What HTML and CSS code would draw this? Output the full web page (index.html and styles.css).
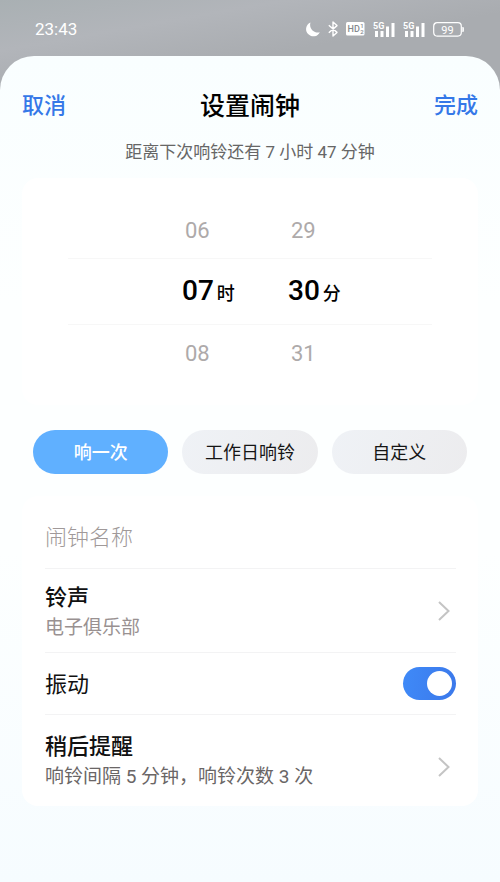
FILE: index.html
```html
<!DOCTYPE html>
<html lang="zh-CN">
<head>
<meta charset="utf-8">
<meta name="viewport" content="width=device-width, initial-scale=1">
<title>设置闹钟</title>
<link rel="stylesheet" href="styles.css">
</head>
<body>
<div class="status">
  <time class="clock">23:43</time>
  <div class="indicators">
    <svg class="moon" width="15" height="15" viewBox="0 0 15 15" aria-hidden="true"><path d="M5.500.5A7.200 7.200 0 1 0 14.800 10.200C9.500 11.600 3.500 6.600 5.500.5z" fill="#fff"/></svg>
    <svg class="bluetooth" width="10" height="16" viewBox="0 0 10 16" aria-hidden="true"><path d="M.8 4.300 9 11.400 5 15V1l4 3.600L.8 11.700" fill="none" stroke="#fff" stroke-width="1.400" stroke-linejoin="round"/></svg>
    <svg class="hd" width="19" height="14" viewBox="0 0 19 14" aria-hidden="true"><rect width="18.500" height="13.500" rx="1.500" fill="#fff"/><g fill="#85898e" font-family="Roboto, sans-serif" font-weight="500"><text x="1.500" y="10.300" font-size="9">HD</text><text x="14.300" y="6.400" font-size="6">1</text><text x="14.300" y="12" font-size="6">2</text></g></svg>
    <svg class="signal" width="22" height="17" viewBox="0 0 22 17" aria-hidden="true"><text x="0" y="7.500" fill="#fff" font-family="Roboto, sans-serif" font-size="9" font-weight="700">5G</text><path d="M2 10h3v6H2zM7.500 10h3v6h-3zM13 5.500h3V16h-3zM18.500 2h3v14h-3z" fill="#fff"/></svg>
    <svg class="signal" width="22" height="17" viewBox="0 0 22 17" aria-hidden="true"><text x="0" y="7.500" fill="#fff" font-family="Roboto, sans-serif" font-size="9" font-weight="700">5G</text><path d="M2 10h3v6H2zM7.500 10h3v6h-3zM13 5.500h3V16h-3zM18.500 2h3v14h-3z" fill="#fff"/></svg>
    <svg class="battery" width="31" height="15" viewBox="0 0 31 15" aria-hidden="true"><rect x=".7" y=".7" width="27.600" height="13.400" rx="3.500" fill="none" stroke="#fff" stroke-width="1.200"/><path d="M29.300 5h.6q1 0 1 1v3q0 1-1 1h-.6z" fill="#fff"/><text x="14.500" y="11.500" text-anchor="middle" fill="#fff" font-family="Roboto, sans-serif" font-size="11">99</text></svg>
  </div>
</div>

<main class="sheet">
  <header class="header">
    <button class="action" type="button">取消</button>
    <h1 class="title">设置闹钟</h1>
    <button class="action" type="button">完成</button>
  </header>
  <p class="countdown">距离下次响铃还有 7 小时 47 分钟</p>

  <section class="card picker" aria-label="时间">
    <div class="picker-row near"><span>06</span><span>29</span></div>
    <div class="picker-row current"><span>07<small>时</small></span><span>30<small>分</small></span></div>
    <div class="picker-row near"><span>08</span><span>31</span></div>
  </section>

  <div class="repeat">
    <button class="pill selected" type="button">响一次</button>
    <button class="pill" type="button">工作日响铃</button>
    <button class="pill" type="button">自定义</button>
  </div>

  <section class="card settings">
    <div class="row name-row"><input class="name" type="text" placeholder="闹钟名称" aria-label="闹钟名称"></div>
    <a class="row link-row" href="#ringtone">
      <span class="text"><span class="label">铃声</span><span class="value muted">电子俱乐部</span></span>
      <svg class="chevron" width="12" height="20" viewBox="0 0 12 20" aria-hidden="true"><path d="M1 1l9.500 9L1 19" /></svg>
    </a>
    <div class="row toggle-row">
      <label class="label" for="vibrate">振动</label>
      <input class="switch" id="vibrate" type="checkbox" role="switch" checked>
    </div>
    <a class="row link-row last" href="#snooze">
      <span class="text"><span class="label">稍后提醒</span><span class="value">响铃间隔 5 分钟，响铃次数 3 次</span></span>
      <svg class="chevron" width="12" height="20" viewBox="0 0 12 20" aria-hidden="true"><path d="M1 1l9.500 9L1 19" /></svg>
    </a>
  </section>
</main>
</body>
</html>
```
FILE: styles.css
```css
* {
  box-sizing: border-box;
}

body {
  margin: 0;
  min-height: 100vh;
  display: flex;
  flex-direction: column;
  background: linear-gradient(170deg, #a9b0b3 0, #b2b5ba 50px, #a9acb0 100px);
  font-family: Roboto, "Noto Sans CJK SC", sans-serif;
  color: #111;
}

button,
input {
  margin: 0;
  padding: 0;
  border: 0;
  background: none;
  font: inherit;
}

.status {
  display: flex;
  justify-content: space-between;
  align-items: center;
  height: 56px;
  padding: 2px 36px 0 35px;
  color: #fff;
}

.clock {
  font-size: 17px;
}

.indicators {
  display: flex;
  align-items: center;
  gap: 8px;
}

.indicators svg {
  display: block;
}

.sheet {
  flex: 1;
  padding: 28px 22px 76px;
  border-radius: 34px 34px 0 0;
  background: linear-gradient(180deg, #f9feff 0, #fdffff 30%, #fdffff 60%, #f6fcff 100%);
}

.header {
  display: flex;
  justify-content: space-between;
  align-items: center;
  height: 44px;
}

.action {
  color: #3578e8;
  font-size: 22px;
  font-weight: 500;
  line-height: 32px;
  cursor: pointer;
}

.title {
  margin: 0;
  padding-top: 2px;
  color: #000;
  font-size: 25px;
  font-weight: 500;
  line-height: 36px;
}

.countdown {
  margin: 12px 0 14px;
  color: #666;
  font-size: 17px;
  line-height: 24px;
  text-align: center;
}

.card {
  border-radius: 16px;
  background: #fff;
}

.picker {
  padding: 24px 46px;
}

.picker-row {
  display: grid;
  grid-template-columns: 54px 54px;
  justify-content: center;
  align-items: center;
  column-gap: 52px;
  padding-left: 24px;
  white-space: nowrap;
}

.near {
  height: 56px;
  color: #aeaaaa;
  font-size: 22px;
}

.near span {
  padding-left: 3px;
}

.current {
  height: 67px;
  padding-bottom: 3px;
  border-top: 1px solid #f7f7f7;
  border-bottom: 1px solid #f7f7f7;
  color: #000;
  font-size: 28px;
  font-weight: 500;
}

.current small {
  margin-left: 3px;
  font-size: 18px;
}

.repeat {
  display: grid;
  grid-template-columns: repeat(3, 1fr);
  gap: 14px;
  padding: 25px 11px 22px;
}

.pill {
  height: 44px;
  padding-bottom: 2px;
  border-radius: 22px;
  background: linear-gradient(110deg, #eff2f6, #ececee);
  color: #151515;
  font-size: 18px;
  cursor: pointer;
}

.pill.selected {
  background: #60b0ff;
  color: #fff;
  font-weight: 500;
}

.settings {
  padding: 0 22px 0 23px;
}

.row {
  display: flex;
  justify-content: space-between;
  align-items: center;
  border-bottom: 1px solid #f3f3f4;
  color: inherit;
  text-decoration: none;
}

.name-row {
  height: 73px;
  padding-top: 12px;
}

.name {
  width: 100%;
  font-size: 22px;
  font-weight: 300;
  line-height: 32px;
  outline: none;
}

.name::placeholder {
  color: #a09999;
  opacity: 1;
}

.link-row {
  height: 84px;
}

.text {
  display: flex;
  flex-direction: column;
  padding-top: 2px;
}

.toggle-row {
  height: 62px;
}

.last {
  height: 91px;
  padding-top: 12px;
  border-bottom: 0;
}

.last .text {
  padding: 0 0 12px;
}

.label {
  color: #111;
  font-size: 22px;
  font-weight: 500;
  line-height: 32px;
}

.toggle-row .label {
  padding-top: 2px;
  font-weight: 400;
}

.value {
  color: #6a6666;
  font-size: 19px;
  line-height: 28px;
}

.muted {
  color: #999191;
}

.chevron {
  margin-right: 6px;
  fill: none;
  stroke: #c4c4c4;
  stroke-width: 2;
}

.switch {
  appearance: none;
  display: flex;
  align-items: center;
  justify-content: flex-end;
  width: 53px;
  height: 33px;
  padding: 4px;
  border-radius: 17px;
  background: linear-gradient(100deg, #3f8af8, #3b78ea);
  cursor: pointer;
}

.switch::before {
  content: "";
  width: 25px;
  height: 25px;
  border-radius: 50%;
  background: #fff;
}

.switch:not(:checked) {
  justify-content: flex-start;
  background: #ddd;
}
```
